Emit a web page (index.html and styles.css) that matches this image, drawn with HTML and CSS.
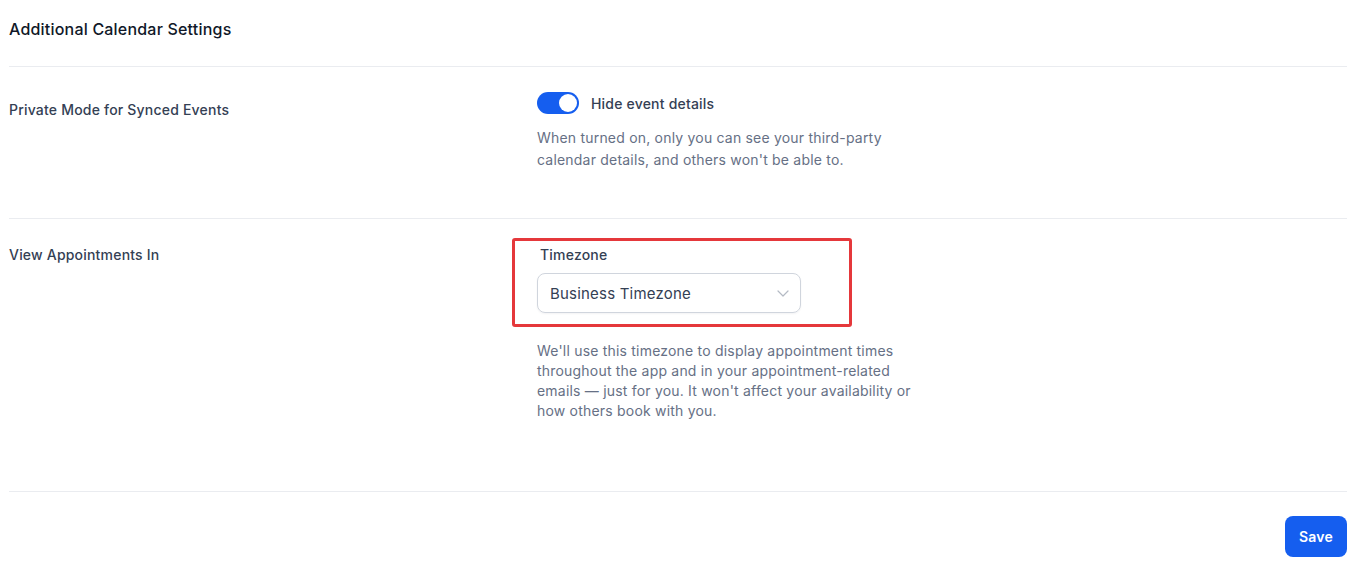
FILE: index.html
```html
<!DOCTYPE html>
<html lang="en">
<head>
    <meta charset="UTF-8">
    <title>Additional Calendar Settings</title>
    <link rel="stylesheet" href="styles.css">
</head>
<body>
    <div class="settings">
        <div class="settings-header">
            <h2>Additional Calendar Settings</h2>
        </div>

        <div class="setting-row private-row">
            <div class="setting-label">Private Mode for Synced Events</div>
            <div class="setting-control">
                <label class="toggle-line">
                    <span class="toggle on"><span class="knob"></span></span>
                    <span class="toggle-text">Hide event details</span>
                </label>
                <p class="help wide">When turned on, only you can see your third-party calendar details, and others won't be able to.</p>
            </div>
        </div>

        <div class="setting-row timezone-row">
            <div class="setting-label">View Appointments In</div>
            <div class="setting-control">
                <div class="field">
                    <div class="field-label">Timezone</div>
                    <div class="select">
                        <span>Business Timezone</span>
                        <svg width="12" height="7" viewBox="0 0 12 7" fill="none">
                            <path d="M1 1l5 5 5-5" stroke="#b4bac4" stroke-width="1.2" stroke-linecap="round" stroke-linejoin="round"/>
                        </svg>
                    </div>
                    <div class="highlight"></div>
                </div>
                <p class="help">We'll use this timezone to display appointment times throughout the app and in your appointment-related emails — just for you. It won't affect your availability or how others book with you.</p>
            </div>
        </div>

        <div class="settings-footer">
            <button class="btn-save">Save</button>
        </div>
    </div>
</body>
</html>
```

FILE: styles.css
```css
body {
    margin: 0;
    padding: 0 24px 0 9px;
    font-family: 'Inter', 'Noto Sans', sans-serif;
    letter-spacing: 0.2px;
    background-color: #fff;
    color: #344054;
}

.settings-header {
    padding: 17px 0 25px;
    border-bottom: 1px solid #eaecf0;
}

.settings-header h2 {
    margin: 0;
    font-size: 16px;
    line-height: 24px;
    font-weight: 500;
    color: #101828;
}

.setting-row {
    display: grid;
    grid-template-columns: 528px 1fr;
    border-bottom: 1px solid #eaecf0;
}

.private-row {
    padding: 25px 0 47px;
}

.private-row .setting-label {
    margin-top: 8px;
}

.timezone-row {
    padding: 26px 0 70px;
}

.setting-label {
    font-size: 14px;
    line-height: 20px;
    font-weight: 500;
    color: #344054;
}

.toggle-line {
    display: flex;
    align-items: center;
    gap: 12px;
    height: 22px;
}

.toggle {
    width: 42px;
    height: 22px;
    border-radius: 11px;
    background-color: #d0d5dd;
    position: relative;
    box-sizing: border-box;
}

.toggle.on {
    background-color: #155eef;
}

.toggle .knob {
    position: absolute;
    top: 2px;
    left: 2px;
    width: 18px;
    height: 18px;
    border-radius: 50%;
    background-color: #fff;
}

.toggle.on .knob {
    left: 22px;
}

.toggle-text {
    font-size: 14px;
    font-weight: 500;
    color: #344054;
}

.help {
    margin: 0;
    font-size: 14px;
    line-height: 20px;
    color: #667085;
    max-width: 380px;
}

.help.wide {
    margin-top: 13px;
    line-height: 22px;
    max-width: 355px;
}

.field {
    position: relative;
    width: 264px;
}

.field-label {
    font-size: 14px;
    line-height: 20px;
    font-weight: 500;
    color: #344054;
    padding-left: 3px;
}

.select {
    margin-top: 8px;
    height: 40px;
    box-sizing: border-box;
    border: 1px solid #d0d5dd;
    border-radius: 8px;
    box-shadow: 0 1px 2px rgba(16, 24, 40, 0.05);
    display: flex;
    align-items: center;
    justify-content: space-between;
    padding: 0 11px 0 12px;
    font-size: 15px;
    color: #344054;
}

.field + .help {
    margin-top: 28px;
}

.highlight {
    position: absolute;
    top: -7px;
    left: -25px;
    width: 340px;
    height: 89px;
    box-sizing: border-box;
    border: 3px solid #e5383b;
    border-radius: 3px;
}

.settings-footer {
    display: flex;
    justify-content: flex-end;
    padding-top: 24px;
}

.btn-save {
    height: 41px;
    padding: 0 14px;
    border: none;
    border-radius: 8px;
    background-color: #155eef;
    color: #fff;
    font-family: inherit;
    font-size: 14px;
    font-weight: 600;
    letter-spacing: 0.2px;
    cursor: pointer;
}
```
